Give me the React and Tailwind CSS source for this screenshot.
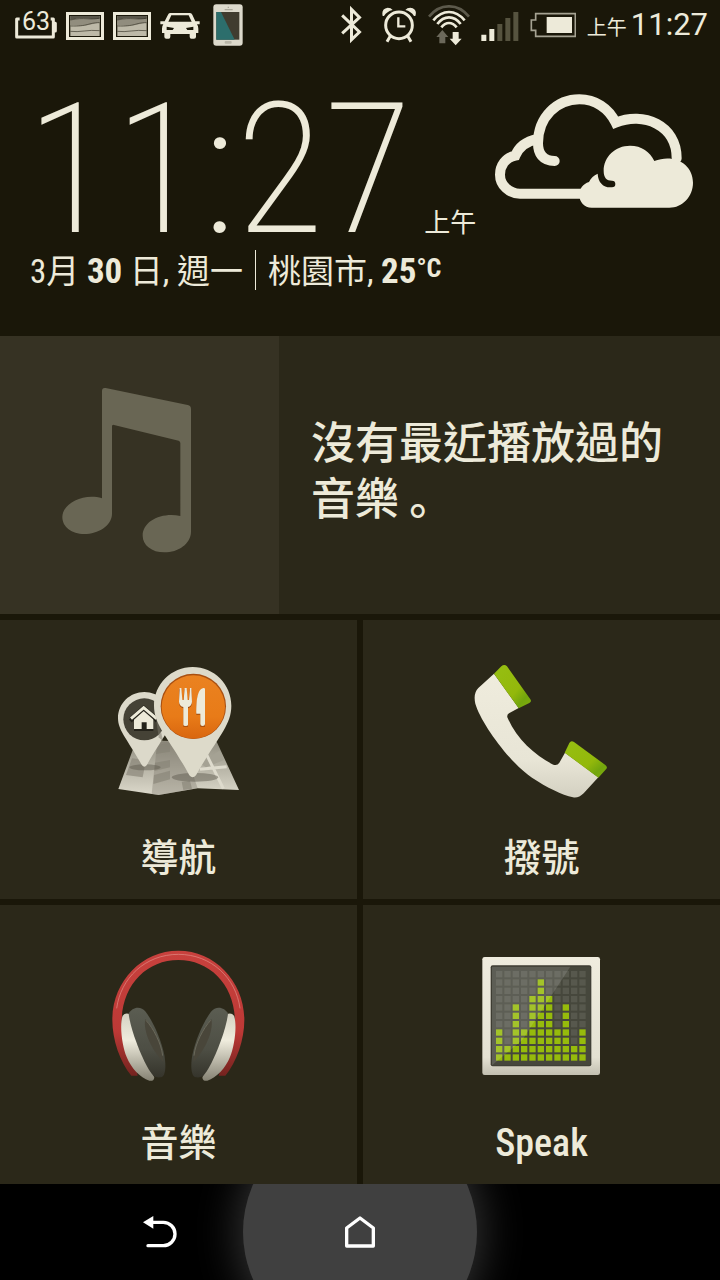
import React from 'react';

const CREAM = '#edead9';

/* ---------- Status bar ---------- */

function BatteryPercent() {
  return (
    <div className="relative h-[50px] w-[42px]">
      <svg viewBox="45 0 126 150" className="h-full w-full" fill="none" stroke={CREAM} strokeWidth="9" strokeLinejoin="round">
        <path d="M59 57H50V111H160V57H152M160 70H166V93H160" />
      </svg>
      <span className="absolute inset-x-0 top-2 text-center font-['Roboto',sans-serif] text-[25px] leading-7">63</span>
    </div>
  );
}

function PictureIcon() {
  return (
    <svg viewBox="195 0 114 150" className="h-[50px] w-[38px]">
      <path fill={CREAM} fillRule="evenodd" d="M195 36H309V120H195ZM204 45V111H300V45Z" />
      <rect x="208" y="48" width="88" height="60" fill="#bdb9a8" />
      <path fill="#59564a" d="M208 48H296V56C270 62 250 50 208 60Z" />
      <path fill="#918d7e" d="M208 60C250 50 270 62 296 56V68C270 70 262 82 208 76Z" />
      <path fill="none" stroke="#3a372b" strokeWidth="2" d="M208 60C250 50 270 62 296 54M208 78C262 80 260 68 296 68M208 94C235 98 262 88 296 92" />
    </svg>
  );
}

function CarIcon() {
  return (
    <svg viewBox="480 0 120 150" className="h-[50px] w-10">
      <path
        fill={CREAM}
        fillRule="evenodd"
        d="M510 39H570Q575 39 577 44L586 64H599V73H591Q595 78 595 86V99H588V110Q588 116 582 116H574Q569 116 569 110V102H511V110Q511 116 506 116H499Q493 116 493 110V99H486V86Q486 78 490 73H481V64H494L504 44Q506 39 510 39ZM514 46L505 65H575L566 46ZM500 80V90H518L522 84ZM580 80V90H562L558 84Z"
      />
    </svg>
  );
}

function PhoneDeviceIcon() {
  return (
    <svg viewBox="639 0 90 150" className="h-[50px] w-[30px]">
      <rect x="640" y="13" width="88" height="124" rx="9" fill="#dcd9cb" />
      <rect x="649" y="36" width="69" height="83" fill="#403c2f" />
      <path d="M649 36H663L704 119H649Z" fill="#2c6e6c" />
      <path d="M674 29H698M683 22H687" stroke="#aaa799" strokeWidth="4" />
      <rect x="674" y="123" width="21" height="8" rx="3" fill="#b9b6a8" />
    </svg>
  );
}

function BluetoothIcon() {
  return (
    <svg viewBox="60 0 62 150" className="h-[50px] w-[21px]">
      <path d="M63 46L115 96L91 119V28L115 52L63 100" fill="none" stroke={CREAM} strokeWidth="9" />
    </svg>
  );
}

function AlarmIcon() {
  return (
    <svg viewBox="182 0 108 150" className="h-[50px] w-9" fill="none" stroke={CREAM} strokeWidth="9">
      <circle cx="236" cy="76" r="40" />
      <path d="M234 52V79H255" strokeWidth="7" />
      <path d="M210 108L200 125M262 108L272 125" />
      <path d="M187 48Q182 26 202 23Q212 23 217 30Q200 34 191 48ZM285 48Q292 26 270 23Q260 23 255 30Q272 34 281 48Z" fill={CREAM} stroke="none" />
    </svg>
  );
}

function WifiIcon() {
  return (
    <svg viewBox="321 0 126 150" className="h-[50px] w-[42px]" fill="none" strokeWidth="8">
      <path d="M324 50Q350 18 384 19Q418 18 444 50" stroke="#5c594b" />
      <path d="M337 61Q358 36 384 36Q410 36 431 61M349 72Q364 52 384 52Q404 52 419 72M361 82Q371 69 384 69Q397 69 407 82" stroke={CREAM} />
      <path d="M364 90L382 111H373V130H355V111H346Z" fill="#6b685a" />
      <path d="M404 136L386 116H395V96H413V116H422Z" fill={CREAM} />
    </svg>
  );
}

function SignalIcon() {
  return (
    <svg viewBox="479 0 114 150" className="h-[50px] w-[38px]">
      <path fill={CREAM} d="M480 104H495V123H480ZM504 87H519V123H504Z" />
      <path fill="#56533f" d="M528 72H543V123H528ZM552 54H567V123H552ZM576 36H591V123H576Z" />
    </svg>
  );
}

function BatteryIcon() {
  return (
    <svg viewBox="630 0 138 150" className="h-[50px] w-[46px]">
      <path d="M647 41H766V109H647V91H634V60H647Z" fill="none" stroke="#a5a292" strokeWidth="5" />
      <rect x="680" y="51" width="76" height="48" fill={CREAM} />
    </svg>
  );
}

function StatusBar() {
  return (
    <div className="flex h-[50px] items-center justify-between pr-3 pl-[15px]">
      <div className="flex items-center gap-[9px]">
        <BatteryPercent />
        <PictureIcon />
        <PictureIcon />
        <CarIcon />
        <div className="pl-1">
          <PhoneDeviceIcon />
        </div>
      </div>
      <div className="flex items-center gap-[11px]">
        <div className="pr-2">
          <BluetoothIcon />
        </div>
        <AlarmIcon />
        <WifiIcon />
        <SignalIcon />
        <BatteryIcon />
        <div className="flex items-baseline gap-1 leading-[50px]">
          <span className="text-xl">上午</span>
          <span className="font-['Roboto',sans-serif] text-[31px]">11:27</span>
        </div>
      </div>
    </div>
  );
}

/* ---------- Clock and weather ---------- */

function CloudIcon() {
  return (
    <svg viewBox="45 42 594 342" className="h-[114px] w-[198px] shrink-0" role="img" aria-label="多雲">
      <g fill="none" stroke={CREAM} strokeWidth="30" strokeLinecap="round">
        <path d="M224 243C187 243 174 220 174 190C174 110 232 58 298 58C345 58 386 84 407 128C490 94 590 135 590 235" strokeLinejoin="miter" />
        <path d="M172 177C138 184 116 202 106 227C76 233 60 257 60 284C60 316 88 341 120 341H310" strokeLinecap="butt" />
      </g>
      <path
        fill={CREAM}
        d="M335 383C313 383 298 366 298 345C298 325 309 312 327 306C333 294 341 286 353 281C354 307 370 322 390 322H396A10 10 0 0 0 396 302C380 302 371 293 371 272C371 230 406 197 450 197C485 197 510 215 523 243C580 220 639 250 639 308C639 350 607 383 568 383Z"
      />
    </svg>
  );
}

function ClockWidget() {
  return (
    <section className="h-[286px] pr-[27px] pl-[26px]">
      <div className="flex h-[198px] items-start justify-between">
        <div className="flex items-baseline pt-[42px]">
          <time className="text-[182px] leading-[156px] font-extralight">11:27</time>
          <span className="pl-3 text-[26px] leading-8">上午</span>
        </div>
        <div className="pt-11">
          <CloudIcon />
        </div>
      </div>
      <div className="flex h-11 items-center pl-1 text-[33px] leading-10">
        <span className="pt-1 whitespace-pre">
          3月 <b className="text-[35px]">30</b> 日, 週一
        </span>
        <span className="mx-3 h-10 w-px bg-[#edead9]" />
        <span className="pt-1">
          桃園市, <b className="text-[35px]">25</b>
        </span>
        <b className="pb-1 text-[26px] leading-8">°C</b>
      </div>
    </section>
  );
}

/* ---------- Recent music ---------- */

function MusicCard() {
  return (
    <button type="button" className="flex min-h-[278px] w-full items-stretch bg-[#2b2819] text-left">
      <span className="flex w-[279px] shrink-0 items-center bg-[#363223] pl-[60px]">
        <svg viewBox="60 14 396 600" className="h-[200px] w-[132px]" fill="#696654">
          <path d="M186 62Q186 51 197 53L443 104Q453 106 453 116V484C453 520 415 546 373 546C335 546 308 524 308 496C308 452 365 425 421 437V218Q421 213 416 211L222 164Q216 162 216 168V430C216 466 174 491 133 491C95 491 67 470 67 440C67 400 130 367 186 384Z" />
        </svg>
      </span>
      <span className="flex-1 px-8 pt-20 text-[44px] leading-14 font-medium">
        沒有最近播放過的音樂 <span className="font-['Noto_Sans_CJK_SC',sans-serif] leading-8">。</span>
      </span>
    </button>
  );
}

/* ---------- App tiles ---------- */

function NavigationIcon() {
  return (
    <svg viewBox="-3 0 480 480" className="h-40 w-40">
      <defs>
        <linearGradient id="mapPaper" x1="0" y1="0" x2="0" y2="1">
          <stop offset="0" stopColor="#918e80" />
          <stop offset="1" stopColor="#dcd9cb" />
        </linearGradient>
        <linearGradient id="orange" x1="0" y1="0" x2="0" y2="1">
          <stop offset="0" stopColor="#ea8220" />
          <stop offset=".65" stopColor="#e87b18" />
          <stop offset="1" stopColor="#d9660f" />
        </linearGradient>
      </defs>
      <path d="M100 295L180 272L350 275L417 420L293 415L176 435L55 417Z" fill="url(#mapPaper)" />
      <path d="M172 275L155 431L176 435L293 415L245 275Z" fill="#777466" opacity=".35" />
      <path d="M78 375L128 382L138 330L96 325Z" fill="#8b887a" opacity=".7" />
      <path d="M172 285L210 278V305L168 312ZM165 338L210 330V352L163 363ZM162 375L210 362V388L160 402ZM245 395L270 392L276 416L250 420Z" fill="#858274" opacity=".6" />
      <path d="M300 340L358 302L372 330L318 352Z" fill="#a5a294" />
      <path d="M318 310L370 416M300 358L380 350" stroke="#dedbcd" strokeWidth="9" />
      <ellipse cx="135" cy="352" rx="47" ry="9" fill="#5f5c4f" opacity=".5" />
      <ellipse cx="285" cy="382" rx="70" ry="13" fill="#5f5c4f" opacity=".5" />
      <path d="M133 126C176 126 212 160 212 205C212 240 186 265 140 346Q133 354 126 346C80 265 54 240 54 205C54 160 90 126 133 126Z" fill="#dcd9ca" />
      <circle cx="133" cy="208" r="63" fill="#454236" />
      <path d="M91 213L131 175L172 213" fill="none" stroke="#24221a" strokeWidth="12" />
      <path d="M102 243V207H160V243Z" fill="#24221a" />
      <path d="M102 237V203L131 176L160 203V237H140V217H125V237Z" fill={CREAM} />
      <path d="M93 208L131 174L170 208" fill="none" stroke="#24221a" strokeWidth="14" />
      <path d="M93 206L131 173L170 206" fill="none" stroke={CREAM} strokeWidth="9" />
      <path d="M160 150L190 275L176 262" fill="#7b786a" opacity=".5" />
      <path d="M278 51C342 51 394 103 394 167C394 228 350 264 288 376Q278 388 268 376C208 264 162 228 162 167C162 103 214 51 278 51Z" fill="#dddaca" />
      <circle cx="280" cy="169" r="98" fill="#a94f10" />
      <circle cx="280" cy="171" r="95" fill="url(#orange)" />
      <g fill="#9c480d" transform="translate(0 4)">
        <path d="M237 114H243L246 150H250L253 114H260L262 150H266L269 114H274L276 155Q275 168 264 171V226H250V171Q238 168 237 155Z" />
        <path d="M315 114V226H301V190H289C289 160 290 118 310 114Z" />
      </g>
      <path fill={CREAM} d="M239 114H244L247 150H251L254 114H260L263 150H267L270 114H274L276 155Q275 168 264 171V224Q264 228 257 228Q250 228 250 224V171Q238 168 237 155Z" />
      <path fill={CREAM} d="M315 118V222Q315 228 308 228Q301 228 301 222V191H289C289 160 290 118 310 114Q315 113 315 118Z" />
    </svg>
  );
}

function DialIcon() {
  return (
    <svg viewBox="5 0 480 480" className="h-40 w-40">
      <defs>
        <linearGradient id="handset" x1="0" y1="0" x2="0" y2="1">
          <stop offset="0" stopColor="#efecdd" />
          <stop offset=".7" stopColor="#e8e5d6" />
          <stop offset="1" stopColor="#d3d0c1" />
        </linearGradient>
        <linearGradient id="cap" x1="0" y1="0" x2="1" y2="1">
          <stop offset="0" stopColor="#96bf12" />
          <stop offset=".6" stopColor="#93b80b" />
          <stop offset=".8" stopColor="#72a50d" />
          <stop offset="1" stopColor="#82ae0c" />
        </linearGradient>
      </defs>
      <path
        d="M101 71L54 114Q38 130 45 161C62 220 150 340 215 383C260 413 305 434 338 442Q355 445 370 430L414 382L314 308L297 338Q291 348 279 344C225 317 170 268 142 204Q138 195 146 190L175 174Z"
        fill="url(#handset)"
      />
      <path d="M101 71L123 49Q132 41 140 49L210 148Q215 155 207 159L175 175Z" fill="url(#cap)" />
      <path d="M313 308L327 279Q332 270 341 276L435 345Q443 351 437 358L414 383Z" fill="url(#cap)" />
    </svg>
  );
}

function EarCup() {
  return (
    <g>
      <path d="M68 242Q76 232 90 238L163 428Q160 440 148 437C120 428 94 400 80 366C66 332 58 270 68 242Z" fill="url(#cupShell)" />
      <path d="M86 236C96 216 122 211 137 230C160 262 182 310 193 360C199 395 196 420 186 426Q170 430 160 422C135 396 92 290 86 236Z" fill="url(#cushion)" />
      <path d="M136 252C128 290 158 350 190 380C188 335 165 285 136 252Z" fill="#49463a" />
      <path d="M138 256C160 280 184 325 188 362" fill="none" stroke="#6a6859" strokeWidth="3" />
    </g>
  );
}

function HeadphonesIcon() {
  return (
    <svg viewBox="-3 0 480 480" className="h-40 w-40">
      <defs>
        <linearGradient id="band" x1="0" y1="0" x2="0" y2="1">
          <stop offset="0" stopColor="#c8413d" />
          <stop offset=".65" stopColor="#bd3936" />
          <stop offset="1" stopColor="#74231f" />
        </linearGradient>
        <linearGradient id="cupShell" x1="0" y1="0" x2="0" y2="1">
          <stop offset="0" stopColor="#d5d2c3" />
          <stop offset=".4" stopColor="#efecdd" />
          <stop offset="1" stopColor="#858273" />
        </linearGradient>
        <linearGradient id="cushion" x1="0" y1="0" x2="0" y2="1">
          <stop offset="0" stopColor="#5b5d52" />
          <stop offset=".6" stopColor="#4d4e44" />
          <stop offset="1" stopColor="#35342b" />
        </linearGradient>
      </defs>
      <path
        d="M94 422C60 380 37 315 37 254C37 140 125 47 235 47C345 47 433 140 433 254C433 315 410 380 376 422H356L362 400C390 350 405 310 405 262C405 150 330 75 235 75C140 75 65 150 65 262C65 310 80 350 108 400L113 422Z"
        fill="url(#band)"
      />
      <path d="M50 220C62 130 135 58 235 58C335 58 408 130 420 220" fill="none" stroke="#e08c84" strokeWidth="3" opacity=".7" />
      <EarCup />
      <g transform="translate(470 0) scale(-1 1)">
        <EarCup />
      </g>
    </svg>
  );
}

const LEVELS = [4, 2, 7, 4, 8, 10, 8, 4, 7, 2, 4];

function EqualizerIcon() {
  return (
    <svg viewBox="5 -15 480 480" className="h-40 w-40">
      <defs>
        <linearGradient id="frame" x1="0" y1="0" x2="0" y2="1">
          <stop offset="0" stopColor="#efecde" />
          <stop offset=".85" stopColor="#e4e1d2" />
          <stop offset="1" stopColor="#c2bfb0" />
        </linearGradient>
      </defs>
      <rect x="66" y="51" width="353" height="354" rx="7" fill="url(#frame)" />
      <rect x="91" y="76" width="302" height="303" rx="6" fill="#3e3d33" />
      <rect x="95" y="80" width="295" height="296" rx="3" fill="#46473c" />
      {LEVELS.map((level, col) =>
        LEVELS.map((_, row) => (
          <rect
            key={`${col}-${row}`}
            x={107 + col * 25}
            y={93 + row * 25}
            width="19"
            height="19"
            fill={11 - row <= level ? '#96bb0b' : '#57584d'}
          />
        ))
      )}
      <path d="M95 80H330L186 300L95 376Z" fill="#fff" opacity=".13" />
    </svg>
  );
}

const APPS = [
  { label: '導航', Icon: NavigationIcon },
  { label: '撥號', Icon: DialIcon },
  { label: '音樂', Icon: HeadphonesIcon },
  { label: 'Speak', Icon: EqualizerIcon },
];

function AppTile({ label, Icon }) {
  return (
    <button type="button" className="flex flex-col items-center bg-[#2b2819] pt-[30px] pb-[18px]">
      <Icon />
      <span className="pt-[26px] text-[38px] leading-11 font-medium">{label}</span>
    </button>
  );
}

/* ---------- Navigation bar ---------- */

function NavBar() {
  return (
    <nav className="grid h-24 grid-cols-[1fr_234px_1fr] overflow-hidden bg-black">
      <button type="button" aria-label="返回" className="flex items-center justify-end pr-[66px]">
        <svg viewBox="131 96 102 120" className="h-10 w-[34px]">
          <path d="M160 127H192A35 35 0 0 1 192 197H146" fill="none" stroke="#fff" strokeWidth="10" strokeLinecap="round" />
          <path d="M131 127L162 108V146Z" fill="#fff" />
        </svg>
      </button>
      <button type="button" aria-label="首頁" className="relative flex items-center justify-center">
        <span className="absolute top-1/2 left-0 size-[234px] -translate-y-1/2 rounded-full bg-[#404040] shadow-[0_0_44px_4px_#363636]" />
        <svg viewBox="735 96 90 120" className="relative h-10 w-[30px]">
          <path d="M740 144L780 114L820 144V198H740Z" fill="none" stroke="#fff" strokeWidth="10" strokeLinejoin="round" />
        </svg>
      </button>
    </nav>
  );
}

export default function App() {
  return (
    <div className="flex min-h-screen flex-col bg-[#1a1709] font-['Roboto_Condensed','Roboto','Noto_Sans_CJK_TC',sans-serif] text-[#edead9]">
      <StatusBar />
      <ClockWidget />
      <main className="flex flex-1 flex-col gap-1.5">
        <MusicCard />
        <div className="grid flex-1 grid-cols-2 gap-1.5">
          {APPS.map((app) => (
            <AppTile key={app.label} {...app} />
          ))}
        </div>
      </main>
      <NavBar />
    </div>
  );
}
